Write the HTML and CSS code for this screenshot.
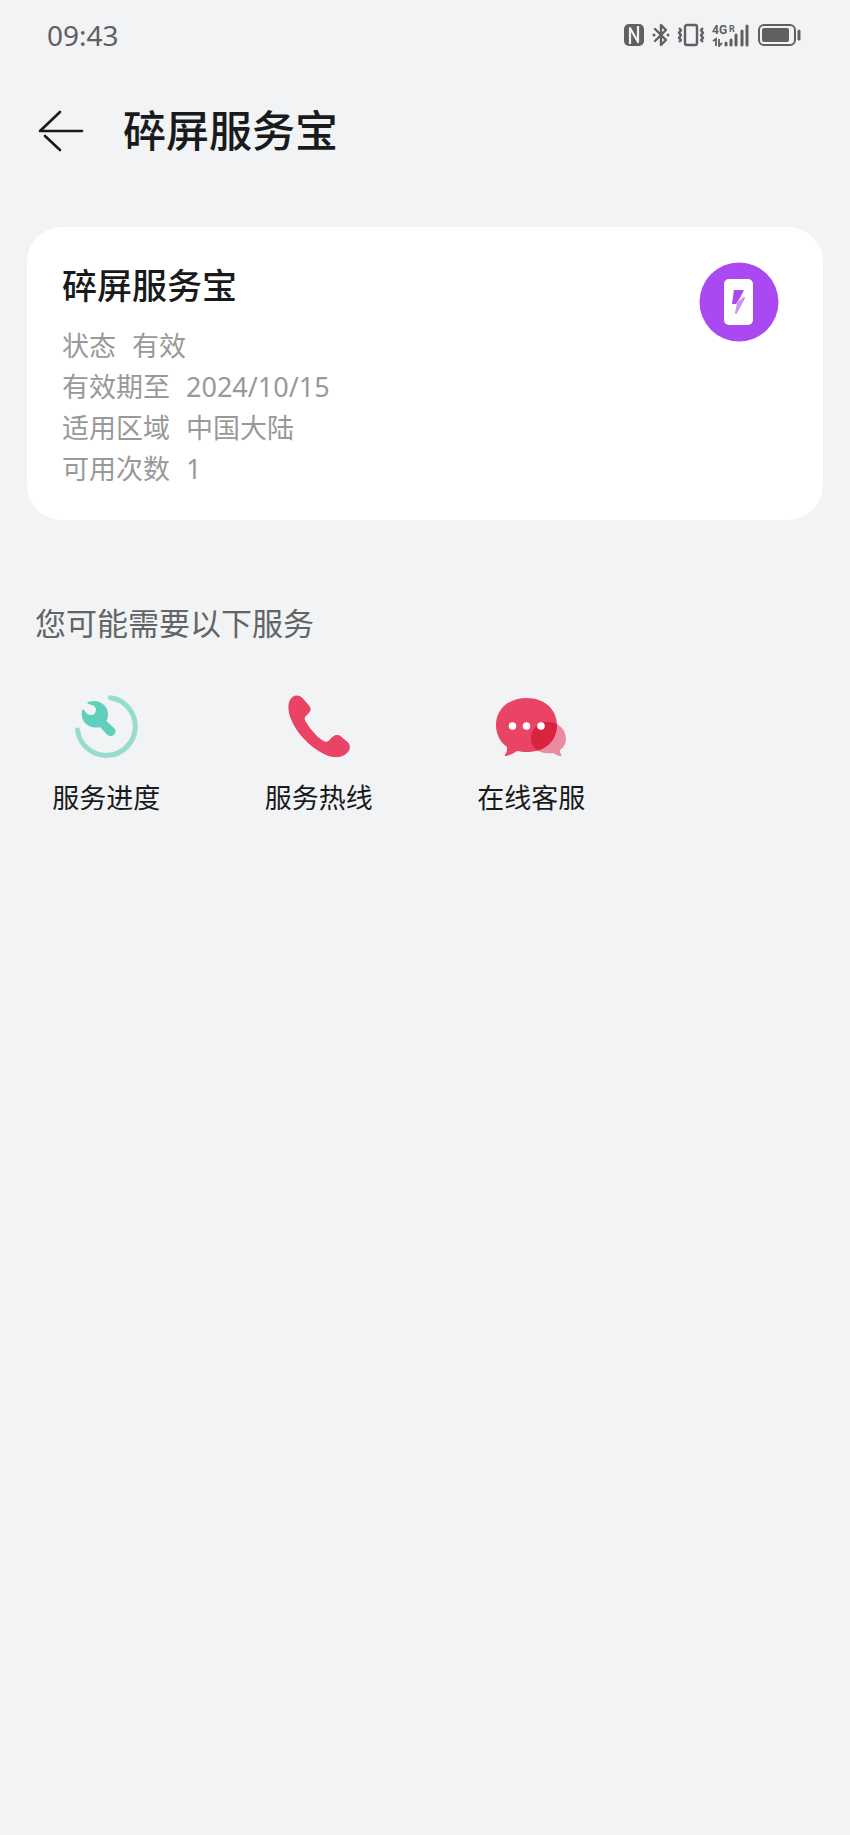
FILE: index.html
```html
<!DOCTYPE html>
<html lang="zh-CN">
<head>
    <meta charset="UTF-8">
    <meta name="viewport" content="width=device-width, initial-scale=1.0">
    <title>碎屏服务宝</title>
    <link rel="stylesheet" href="styles.css">
</head>
<body>
    <div class="status-bar">
        <span class="time">09:43</span>
        <div class="status-icons">
            <!-- NFC -->
            <svg width="22" height="24" viewBox="0 0 22 24">
                <rect x="1" y="1" width="20" height="22" rx="5" fill="#5f6062"/>
                <path d="M7 21V5L15 19V3" fill="none" stroke="#f1f3f5" stroke-width="2.2" stroke-linejoin="round"/>
            </svg>
            <!-- Bluetooth -->
            <svg width="18" height="24" viewBox="0 0 18 24">
                <path d="M3 6L14 17L9 22V2L14 7L3 18" fill="none" stroke="#5f6062" stroke-width="2.4" stroke-linejoin="round" stroke-linecap="round"/>
                <circle cx="2" cy="12" r="1.5" fill="#5f6062"/>
                <circle cx="16" cy="12" r="1.5" fill="#5f6062"/>
            </svg>
            <!-- Vibrate -->
            <svg width="28" height="24" viewBox="0 0 28 24">
                <rect x="8" y="2" width="12" height="20" rx="2" fill="none" stroke="#5f6062" stroke-width="2.4"/>
                <path d="M2 5L4 7L2 10L4 12L2 15L4 17L2 19M26 5L24 7L26 10L24 12L26 15L24 17L26 19" fill="none" stroke="#5f6062" stroke-width="2.4" stroke-linejoin="round"/>
            </svg>
            <!-- Mobile signal -->
            <svg class="signal" width="38" height="24" viewBox="0 0 38 24">
                <text x="0" y="11" font-size="12">4G</text>
                <text x="17" y="9" font-size="9">R</text>
                <path d="M1 18L4 16V23M7 16V23L10 20" fill="none" stroke="#5f6062" stroke-width="1.8"/>
                <path d="M14 20V22M19 17V22M24 12V22M30 8V22M35 3V22" fill="none" stroke="#5f6062" stroke-width="3" stroke-linecap="round"/>
            </svg>
            <!-- Battery -->
            <svg width="46" height="24" viewBox="0 0 46 24">
                <rect x="2" y="2" width="36" height="20" rx="5" fill="none" stroke="#5f6062" stroke-width="2"/>
                <rect x="5" y="5" width="27" height="14" rx="2" fill="#5f6062"/>
                <path d="M42 8V16" stroke="#5f6062" stroke-width="3" stroke-linecap="round"/>
            </svg>
        </div>
    </div>

    <header class="header">
        <button type="button" class="back" aria-label="返回">
            <svg width="46" height="42" viewBox="0 0 46 42">
                <path d="M22 2L2 21H44M7 26L22 40" fill="none" stroke="#191a1c" stroke-width="2.6" stroke-linecap="round" stroke-linejoin="round"/>
            </svg>
        </button>
        <h1>碎屏服务宝</h1>
    </header>

    <main>
        <section class="card">
            <div class="card-info">
                <h2>碎屏服务宝</h2>
                <dl>
                    <div class="row"><dt>状态</dt><dd>有效</dd></div>
                    <div class="row"><dt>有效期至</dt><dd>2024/10/15</dd></div>
                    <div class="row"><dt>适用区域</dt><dd>中国大陆</dd></div>
                    <div class="row"><dt>可用次数</dt><dd>1</dd></div>
                </dl>
            </div>
            <svg class="card-icon" width="80" height="80" viewBox="0 0 80 80">
                <circle cx="40" cy="40" r="39.5" fill="#aa48f2"/>
                <rect x="25" y="17" width="29" height="46" rx="5" fill="#fff"/>
                <path d="M45 36L37 51L39 41Z" fill="#cd94f7" stroke="#cd94f7" stroke-width="2" stroke-linejoin="round"/>
                <path d="M35 28H45L41 36L37 42H33Z" fill="#aa48f2"/>
            </svg>
        </section>

        <h3 class="section-title">您可能需要以下服务</h3>
        <div class="services">
            <button type="button" class="service">
                <svg width="80" height="72" viewBox="0 0 80 72">
                    <path d="M44.5 7.7A29 29 0 1 1 11.5 40" fill="none" stroke="#98dcd0" stroke-width="5" stroke-linecap="round"/>
                    <path d="M21.5 12.5Q23 11 28 11C36 11 42 17 42 24Q42 28 40.5 31L48.5 38.5C52 43 46 48.5 41.5 45L34 37C28 39 20 36 17 30C15.5 26 15.5 23 16 20.5Q17 18.5 18.5 20.5C20 24 24 26 27.5 24.5C31 22 30.5 17.5 27.5 15.5L22.5 14Q21 13.5 21.5 12.5Z" fill="#60cfbe"/>
                </svg>
                <span>服务进度</span>
            </button>
            <button type="button" class="service">
                <svg width="80" height="72" viewBox="0 0 80 72">
                    <path d="M13 7.5C16 4.5 21 5 23.5 8L30 15.5C33 19 31.5 22 28 25C25.5 27 25 29 27 32C32 40 37 46 43 50C46 52 48 52.5 50 50.5C54 45.5 58 43.5 62 46.5L68.5 52C72 55 71.5 60 68 63C62 68.5 54 68.5 45 64C29 56 17 42 11.5 28C8.5 19 8.5 12 13 7.5Z" fill="#e94466"/>
                </svg>
                <span>服务热线</span>
            </button>
            <button type="button" class="service">
                <svg width="80" height="72" viewBox="5 0 80 72">
                    <defs>
                        <clipPath id="bubble">
                            <path d="M40.5 8C58 8 71 19 71 35C71 52 58 62 41 62C37 62 34 61.5 31 61C28 63 24 65 20 66C18.5 66.5 18.5 65 19.5 64C21 62 21 60 21 57C14 52 10 44 10 35C10 19 23 8 40.5 8Z"/>
                        </clipPath>
                        <path id="small" d="M62 32C72 32 80 39 80 49C80 54 77 58 74 60C74 62 74.5 64 75.5 65C76 66 75 66.5 74 66C71 65.5 69 64 67 63C54 65 45 58 45 49C45 39 52 32 62 32Z"/>
                    </defs>
                    <use href="#small" fill="#ec8ba0"/>
                    <g clip-path="url(#bubble)">
                        <rect width="80" height="72" fill="#e94466"/>
                        <use href="#small" fill="#d9233f"/>
                    </g>
                    <circle cx="26.5" cy="36" r="3.8" fill="#fff"/>
                    <circle cx="40.5" cy="36" r="3.8" fill="#fff"/>
                    <circle cx="55" cy="36" r="3.8" fill="#fff"/>
                </svg>
                <span>在线客服</span>
            </button>
        </div>
    </main>
</body>
</html>
```
FILE: styles.css
```css
* {
    box-sizing: border-box;
}

body {
    margin: 0;
    background-color: #f1f3f5;
    color: #191a1c;
    font-family: "Noto Sans", "Noto Sans CJK SC", sans-serif;
}

h1,
h2,
h3,
dl,
dd {
    margin: 0;
}

svg {
    display: block;
}

button {
    border: none;
    padding: 0;
    background: none;
    color: inherit;
    font-family: inherit;
    cursor: pointer;
}

.status-bar {
    display: flex;
    align-items: center;
    justify-content: space-between;
    height: 70px;
    padding: 0 47px;
}

.time {
    font-size: 28px;
    line-height: 36px;
    color: #5f6062;
}

.status-icons {
    display: flex;
    align-items: center;
    gap: 7px;
}

.signal text {
    font-family: Roboto, sans-serif;
    font-weight: 700;
    fill: #5f6062;
}

.header {
    display: flex;
    align-items: center;
    gap: 39px;
    height: 122px;
    padding: 0 38px;
}

.header h1 {
    font-size: 43px;
    font-weight: 500;
    line-height: 60px;
}

.card {
    display: flex;
    align-items: flex-start;
    justify-content: space-between;
    margin: 35px 27px 0;
    padding: 35px 44px 31px 35px;
    border-radius: 35px;
    background-color: #fff;
}

.card h2 {
    margin-bottom: 15px;
    font-size: 35px;
    font-weight: 500;
    line-height: 48px;
}

.row {
    display: flex;
    gap: 16px;
    font-size: 27px;
    line-height: 41px;
    color: #999;
}

.section-title {
    margin: 81px 35px 45px;
    font-size: 31px;
    font-weight: 400;
    line-height: 44px;
    color: #626466;
}

.services {
    display: grid;
    grid-template-columns: repeat(4, 1fr);
}

.service {
    display: flex;
    flex-direction: column;
    align-items: center;
    gap: 18px;
    font-size: 27px;
    line-height: 36px;
}
```
